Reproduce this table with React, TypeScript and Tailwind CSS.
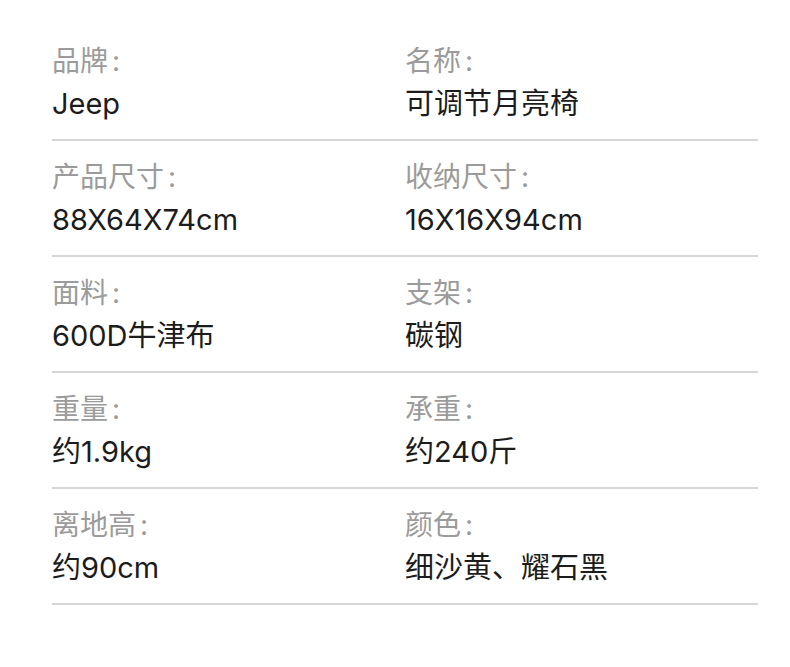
const SPECS: [string, string][] = [
  ["品牌", "Jeep"],
  ["名称", "可调节月亮椅"],
  ["产品尺寸", "88X64X74cm"],
  ["收纳尺寸", "16X16X94cm"],
  ["面料", "600D牛津布"],
  ["支架", "碳钢"],
  ["重量", "约1.9kg"],
  ["承重", "约240斤"],
  ["离地高", "约90cm"],
  ["颜色", "细沙黄、耀石黑"],
];

// Two specs per row, hairline under each row.
export default function App() {
  const rows: [string, string][][] = [];
  for (let i = 0; i < SPECS.length; i += 2) rows.push(SPECS.slice(i, i + 2));

  return (
    <div className="min-h-[667px] bg-white pt-[25px] pr-8 pl-[52px] font-['Inter','Noto_Sans_CJK_SC',sans-serif]">
      {rows.map((row, i) => (
        <div
          key={i}
          className="grid grid-cols-2 border-b-2 border-[#d6d6d6] pt-4 pb-3"
        >
          {row.map(([label, value]) => (
            <div key={label}>
              <p className="text-[28px] leading-[40px] text-[#9b9b9b]">
                {label}
                <span className="ml-1">:</span>
              </p>
              <p className="text-[29px] leading-[46px] text-[#1c1c1c]">{value}</p>
            </div>
          ))}
        </div>
      ))}
    </div>
  );
}
